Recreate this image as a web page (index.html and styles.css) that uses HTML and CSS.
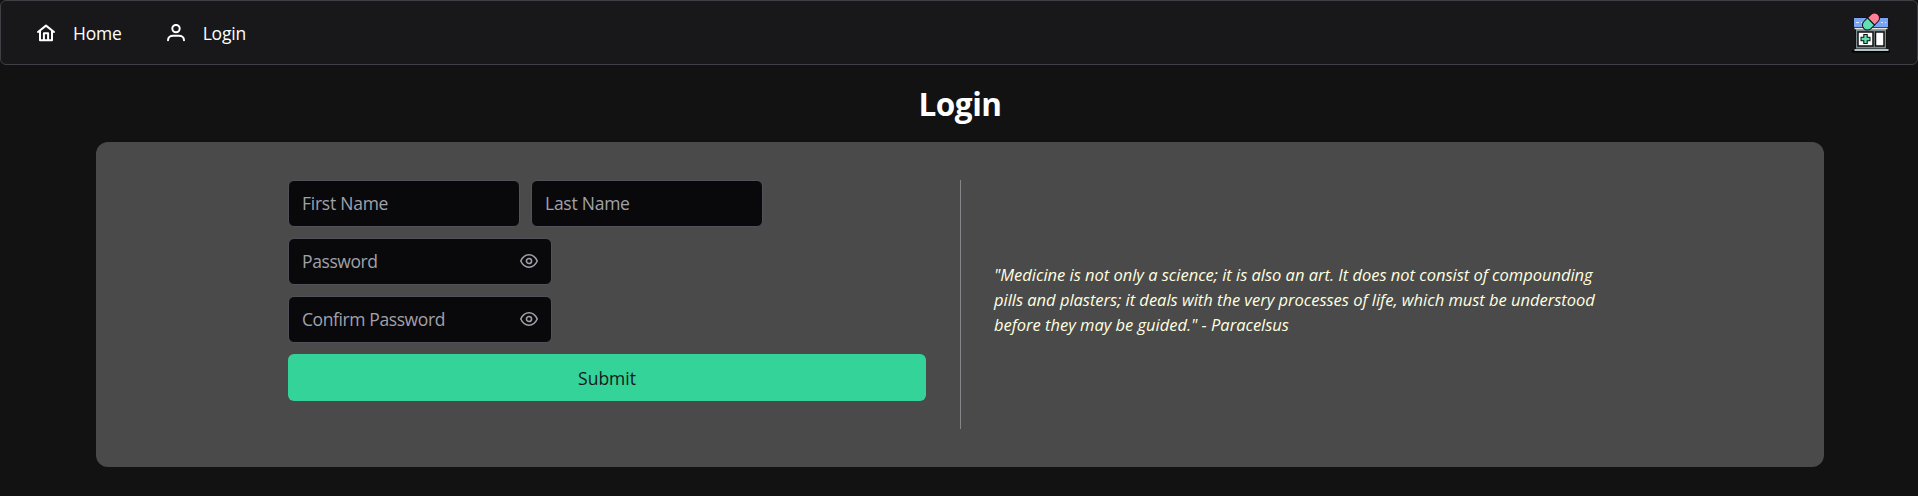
FILE: index.html
```html
<!DOCTYPE html>
<html lang="en">
<head>
<meta charset="utf-8">
<title>Login</title>
<link rel="stylesheet" href="styles.css">
</head>
<body>
<nav class="menubar">
  <a class="menu-item" href="#">
    <svg class="menu-icon" viewBox="0 0 18 18" fill="none" stroke="currentColor" stroke-width="2" stroke-linecap="round" stroke-linejoin="round"><path d="M1 8 9 1.600l8 6.400M3 7v9.200h12V7M6.900 16V9.300h4.200V16"/></svg>
    <span>Home</span>
  </a>
  <a class="menu-item" href="#">
    <svg class="menu-icon" viewBox="0 0 18 18" fill="none" stroke="currentColor" stroke-width="2" stroke-linecap="round"><circle cx="9" cy="4.600" r="3.700"/><path d="M1 16.200c0-3.100 2.600-4.400 5-4.400h6c2.400 0 5 1.300 5 4.400"/></svg>
    <span>Login</span>
  </a>
  <svg class="logo" viewBox="0 0 40 40">
    <path d="M1 38.500h38" stroke="#000" stroke-width="2"/>
    <path d="M4.500 15h31v21h-31z" fill="#7b8d91" stroke="#111"/>
    <path d="M7 19h15v14H7zM24.500 19h8.500v14h-8.500z" fill="#fff" stroke="#111" stroke-width="1.500"/>
    <path d="M2.500 4.500h35v10h-35z" fill="#7aa5f5" stroke="#10121c"/>
    <path d="M5 9.500h3M10 9.500h1M30 9.500h2M34 9.500h1" stroke="#dce8ff"/>
    <path d="M3.500 15.500h33" stroke="#e6e4d8" stroke-width="1.500"/>
    <path d="M3.500 37h34" stroke="#b8c5c8" stroke-width="2"/>
    <path d="M14.500 21v10M9.500 26h10" stroke="#111" stroke-width="4.500"/>
    <path d="M14.500 22v8M10.500 26h8" stroke="#5fe0b0" stroke-width="2.300"/>
    <g transform="rotate(-45 20 8.500)" stroke="#111"><path d="M20 3.500h5a5 5 0 0 1 0 10h-5z" fill="#ff7f96"/><path d="M20 3.500h-5a5 5 0 0 0 0 10h5z" fill="#5fe0b5"/></g>
  </svg>
</nav>
<main class="page">
  <h1 class="title">Login</h1>
  <section class="card">
    <form class="form">
      <div class="names">
        <input class="field" type="text" placeholder="First Name">
        <input class="field" type="text" placeholder="Last Name">
      </div>
      <div class="field password">
        <input class="bare" type="password" placeholder="Password">
        <svg class="eye" viewBox="0 0 14 14" fill="none" stroke="currentColor" stroke-width="1.200"><path d="M.6 7C1.100 5.900 3.100 2.200 7 2.200S12.900 5.900 13.400 7C12.900 8.100 10.900 11.800 7 11.800S1.100 8.100.6 7z"/><circle cx="7" cy="7" r="2"/></svg>
      </div>
      <div class="field password">
        <input class="bare" type="password" placeholder="Confirm Password">
        <svg class="eye" viewBox="0 0 14 14" fill="none" stroke="currentColor" stroke-width="1.200"><path d="M.6 7C1.100 5.900 3.100 2.200 7 2.200S12.900 5.900 13.400 7C12.900 8.100 10.900 11.800 7 11.800S1.100 8.100.6 7z"/><circle cx="7" cy="7" r="2"/></svg>
      </div>
      <button class="submit" type="button">Submit</button>
    </form>
    <blockquote class="quote">
      <div>"Medicine is not only a science; it is also an art. It does not consist of compounding</div>
      <div>pills and plasters; it deals with the very processes of life, which must be understood</div>
      <div>before they may be guided." - Paracelsus</div>
    </blockquote>
  </section>
</main>
</body>
</html>
```
FILE: styles.css
```css
* { box-sizing: border-box; }
body {
  margin: 0;
  height: 496px;
  overflow: hidden;
  background: #121212;
  color: #fff;
  font-family: "Open Sans", "Noto Sans", sans-serif;
}
.menubar {
  display: flex;
  align-items: center;
  height: 65px;
  padding: 0 26px 0 36px;
  border: 1px solid #3f3f46;
  border-radius: 6px;
  background: #18181b;
}
.menu-item {
  display: flex;
  align-items: center;
  gap: 18px;
  margin-right: 45px;
  color: #fff;
  font-size: 17.5px;
  letter-spacing: -0.2px;
  text-decoration: none;
}
.menu-icon { width: 18px; height: 18px; }
.logo { width: 40px; height: 40px; margin-left: auto; }
.page { padding: 0 94px 0 96px; }
.title {
  height: 77px;
  margin: 0;
  padding-top: 18px;
  font-size: 31.5px;
  line-height: 42px;
  letter-spacing: -0.5px;
  text-align: center;
}
.card {
  display: grid;
  grid-template-columns: 672px 1fr;
  height: 325px;
  padding: 38px 192px;
  border-radius: 12px;
  background: #4a4a4a;
}
.form {
  display: flex;
  flex-direction: column;
  gap: 11px;
  padding-right: 34px;
}
.names { display: flex; gap: 11px; }
.field {
  width: 232px;
  height: 47px;
  padding: 0 13px 1px;
  border: 1px solid #52525b;
  border-radius: 6px;
  background: #09090b;
}
.field, .bare {
  color: #fff;
  font: 17.5px "Open Sans", "Noto Sans", sans-serif;
  letter-spacing: -0.25px;
}
.field::placeholder, .bare::placeholder { color: #a1a1aa; opacity: 1; }
.password {
  display: flex;
  align-items: center;
  width: 264px;
  color: #a1a1aa;
}
.bare {
  flex: 1;
  min-width: 0;
  padding: 0;
  border: 0;
  background: none;
  letter-spacing: -0.4px;
}
.eye { width: 18px; height: 18px; }
.submit {
  height: 47px;
  border: 0;
  border-radius: 6px;
  background: #34d399;
  color: #18181b;
  font: 500 17.5px "Open Sans", "Noto Sans", sans-serif;
}
.quote {
  display: flex;
  flex-direction: column;
  justify-content: center;
  margin: 0;
  padding: 0 0 11px 33px;
  border-left: 1px solid #86868a;
  color: #ffffe0;
  font-size: 16.5px;
  font-style: italic;
  line-height: 25px;
  letter-spacing: -0.02px;
  white-space: nowrap;
}
```
